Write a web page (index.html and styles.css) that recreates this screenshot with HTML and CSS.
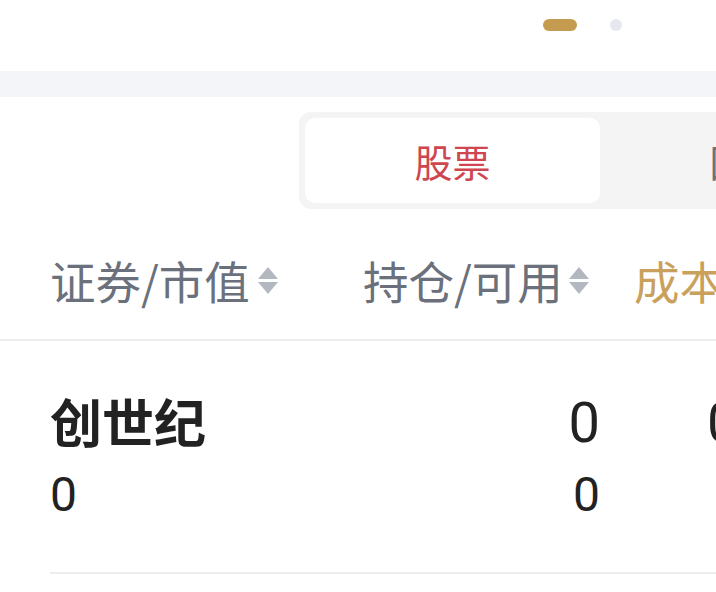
FILE: index.html
```html
<!DOCTYPE html>
<html lang="zh-CN">
<head>
<meta charset="utf-8">
<link rel="stylesheet" href="styles.css">
</head>
<body>
<div class="page">
  <div class="top">
    <span class="dot dot-active"></span>
    <span class="dot"></span>
  </div>
  <div class="band"></div>
  <div class="tabs-wrap">
    <div class="segment">
      <div class="seg-tab seg-active">股票</div>
      <div class="seg-tab">回购</div>
    </div>
  </div>
  <div class="thead">
    <div class="th col1">证券/市值<span class="sort"><i class="up"></i><i class="down"></i></span></div>
    <div class="th col2">持仓/可用<span class="sort"><i class="up"></i><i class="down"></i></span></div>
    <div class="th col3 gold">成本</div>
  </div>
  <div class="row">
    <div class="cell col1">
      <div class="name">创世纪</div>
      <div class="sub">0</div>
    </div>
    <div class="cell col2 right">
      <div class="num">0</div>
      <div class="sub">0</div>
    </div>
    <div class="cell col3">
      <div class="num">0</div>
    </div>
  </div>
</div>
</body>
</html>
```
FILE: styles.css
```css
html, body {
  margin: 0;
  padding: 0;
  background: #ffffff;
}
body {
  width: 716px;
  height: 592px;
  overflow: hidden;
  font-family: "Noto Sans CJK SC", "Noto Sans", sans-serif;
}
.page {
  width: 716px;
}
.top {
  height: 71px;
  display: flex;
  align-items: flex-start;
  padding-left: 543px;
  box-sizing: border-box;
  gap: 33px;
}
.dot {
  margin-top: 19px;
  width: 12px;
  height: 12px;
  border-radius: 6px;
  background: #e6e8ef;
}
.dot-active {
  width: 34px;
  background: #c49b4f;
}
.band {
  height: 26px;
  background: #f4f5f9;
}
.tabs-wrap {
  padding-top: 15px;
  padding-left: 299px;
  overflow: hidden;
}
.segment {
  display: flex;
  width: 900px;
  height: 97px;
  box-sizing: border-box;
  padding: 6px;
  background: #f4f4f5;
  border-radius: 12px;
}
.seg-tab {
  width: 295px;
  height: 85px;
  display: flex;
  align-items: center;
  justify-content: center;
  font-size: 38px;
  color: #6b717c;
  border-radius: 10px;
  flex: none;
}
.seg-active {
  background: #ffffff;
  color: #cf4650;
}
.thead {
  display: flex;
  height: 132px;
  box-sizing: border-box;
  padding-top: 48px;
  padding-left: 50px;
  border-bottom: 2px solid #ededef;
  white-space: nowrap;
}
.th {
  display: flex;
  align-items: center;
  font-size: 45.5px;
  line-height: 46px;
  height: 46px;
  color: #6b717c;
}
.col1 { width: 313px; flex: none; }
.col2 { width: 271px; flex: none; box-sizing: border-box; }
.col3 { flex: none; }
.gold { color: #c9a15c; }
.sort {
  display: flex;
  flex-direction: column;
  gap: 3px;
  margin-left: 8px;
}
.col2 .sort { margin-left: 6px; }
.sort i {
  display: block;
  width: 0;
  height: 0;
  border-left: 10.5px solid transparent;
  border-right: 10.5px solid transparent;
}
.sort .up { border-bottom: 12px solid #b3b7bf; }
.sort .down { border-top: 12px solid #b3b7bf; }
.row {
  display: flex;
  margin-left: 50px;
  height: 233px;
  box-sizing: border-box;
  padding-top: 54px;
  border-bottom: 2px solid #ededef;
}
.row .col2 { padding-right: 34px; }
.row .col3 { padding-left: 73px; }
.cell { color: #222222; }
.right { text-align: right; }
.name {
  font-size: 52px;
  line-height: 52px;
  height: 56px;
  font-weight: 700;
}
.num {
  font-family: Roboto, "Noto Sans", sans-serif;
  font-size: 56px;
  line-height: 56px;
  height: 56px;
}
.sub {
  font-family: Roboto, "Noto Sans", sans-serif;
  font-size: 48px;
  line-height: 48px;
  margin-top: 20px;
}
```
